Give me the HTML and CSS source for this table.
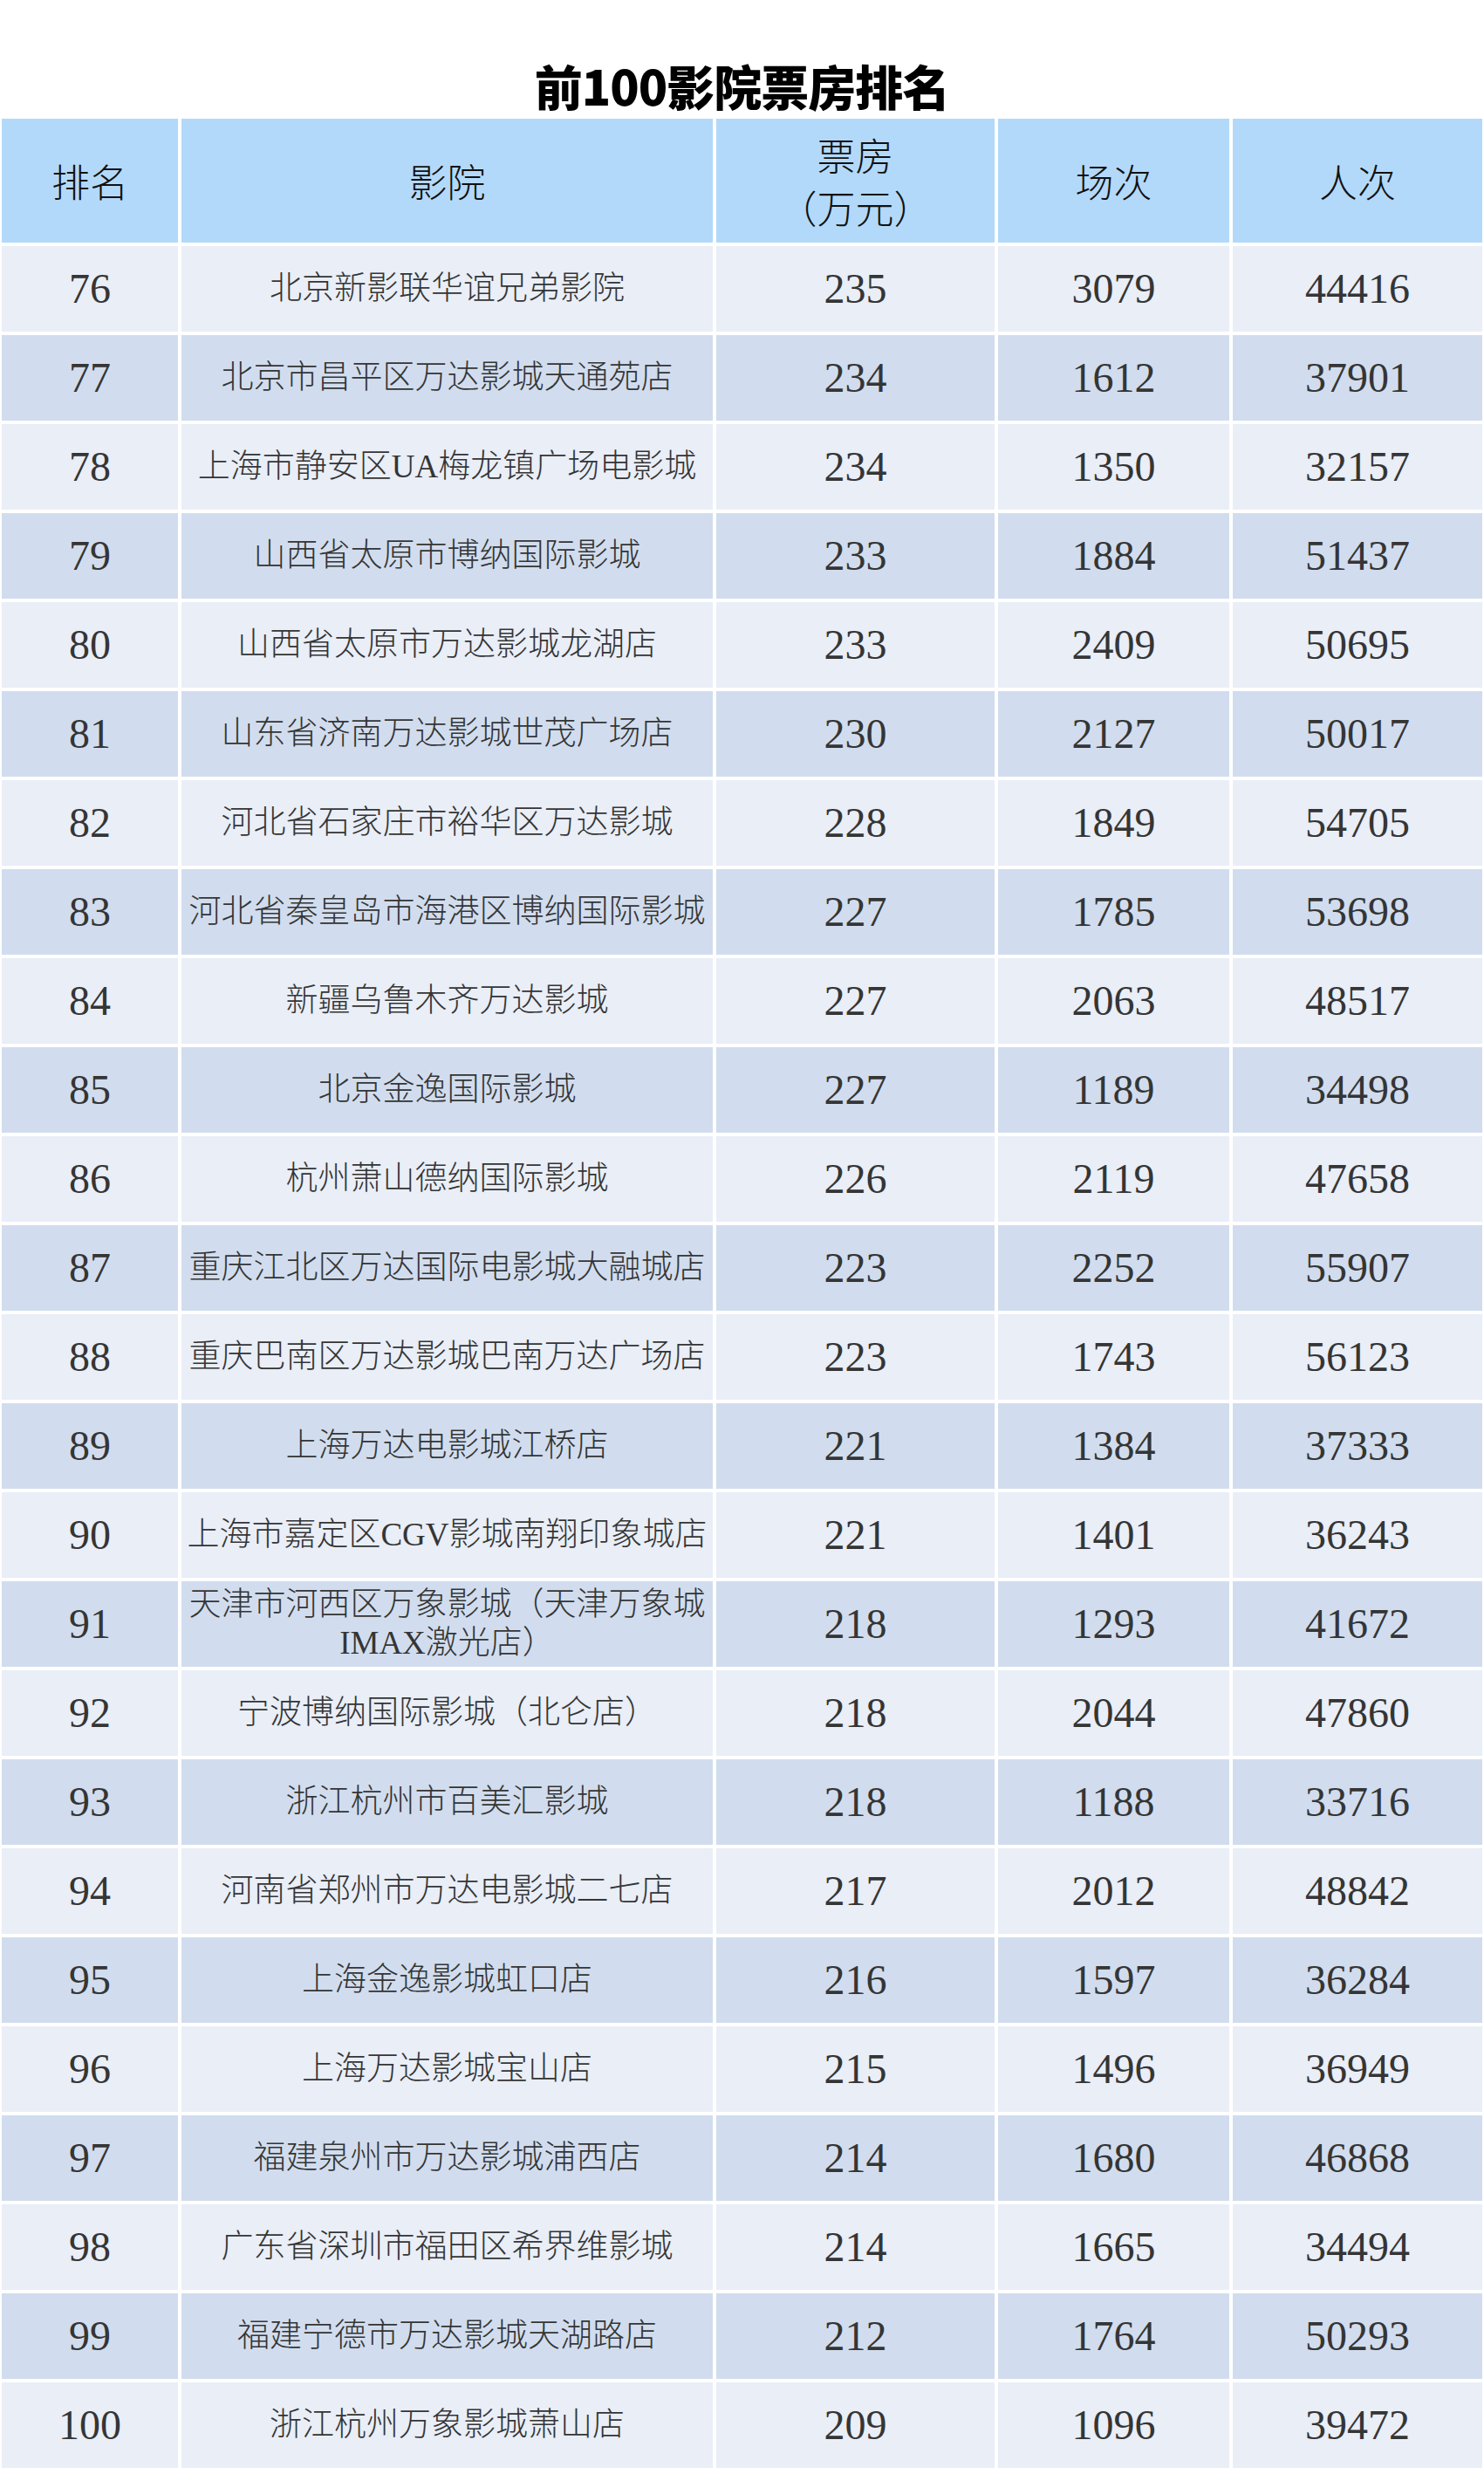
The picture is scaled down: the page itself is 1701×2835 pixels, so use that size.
FILE: index.html
```html
<!DOCTYPE html>
<html lang="zh-CN">
<head>
<meta charset="utf-8">
<title>前100影院票房排名</title>
<link rel="stylesheet" href="styles.css">
</head>
<body>
<h1 class="title">前100影院票房排名</h1>
<div class="table">
  <div class="row head">
    <div class="cell">排名</div>
    <div class="cell">影院</div>
    <div class="cell stack"><span class="line">票房</span><span class="line">（万元）</span></div>
    <div class="cell">场次</div>
    <div class="cell">人次</div>
  </div>
  <div class="row odd"><div class="cell num">76</div><div class="cell name">北京新影联华谊兄弟影院</div><div class="cell num">235</div><div class="cell num">3079</div><div class="cell num">44416</div></div>
  <div class="row even"><div class="cell num">77</div><div class="cell name">北京市昌平区万达影城天通苑店</div><div class="cell num">234</div><div class="cell num">1612</div><div class="cell num">37901</div></div>
  <div class="row odd"><div class="cell num">78</div><div class="cell name">上海市静安区UA梅龙镇广场电影城</div><div class="cell num">234</div><div class="cell num">1350</div><div class="cell num">32157</div></div>
  <div class="row even"><div class="cell num">79</div><div class="cell name">山西省太原市博纳国际影城</div><div class="cell num">233</div><div class="cell num">1884</div><div class="cell num">51437</div></div>
  <div class="row odd"><div class="cell num">80</div><div class="cell name">山西省太原市万达影城龙湖店</div><div class="cell num">233</div><div class="cell num">2409</div><div class="cell num">50695</div></div>
  <div class="row even"><div class="cell num">81</div><div class="cell name">山东省济南万达影城世茂广场店</div><div class="cell num">230</div><div class="cell num">2127</div><div class="cell num">50017</div></div>
  <div class="row odd"><div class="cell num">82</div><div class="cell name">河北省石家庄市裕华区万达影城</div><div class="cell num">228</div><div class="cell num">1849</div><div class="cell num">54705</div></div>
  <div class="row even"><div class="cell num">83</div><div class="cell name">河北省秦皇岛市海港区博纳国际影城</div><div class="cell num">227</div><div class="cell num">1785</div><div class="cell num">53698</div></div>
  <div class="row odd"><div class="cell num">84</div><div class="cell name">新疆乌鲁木齐万达影城</div><div class="cell num">227</div><div class="cell num">2063</div><div class="cell num">48517</div></div>
  <div class="row even"><div class="cell num">85</div><div class="cell name">北京金逸国际影城</div><div class="cell num">227</div><div class="cell num">1189</div><div class="cell num">34498</div></div>
  <div class="row odd"><div class="cell num">86</div><div class="cell name">杭州萧山德纳国际影城</div><div class="cell num">226</div><div class="cell num">2119</div><div class="cell num">47658</div></div>
  <div class="row even"><div class="cell num">87</div><div class="cell name">重庆江北区万达国际电影城大融城店</div><div class="cell num">223</div><div class="cell num">2252</div><div class="cell num">55907</div></div>
  <div class="row odd"><div class="cell num">88</div><div class="cell name">重庆巴南区万达影城巴南万达广场店</div><div class="cell num">223</div><div class="cell num">1743</div><div class="cell num">56123</div></div>
  <div class="row even"><div class="cell num">89</div><div class="cell name">上海万达电影城江桥店</div><div class="cell num">221</div><div class="cell num">1384</div><div class="cell num">37333</div></div>
  <div class="row odd"><div class="cell num">90</div><div class="cell name">上海市嘉定区CGV影城南翔印象城店</div><div class="cell num">221</div><div class="cell num">1401</div><div class="cell num">36243</div></div>
  <div class="row even"><div class="cell num">91</div><div class="cell name">天津市河西区万象影城（天津万象城IMAX激光店）</div><div class="cell num">218</div><div class="cell num">1293</div><div class="cell num">41672</div></div>
  <div class="row odd"><div class="cell num">92</div><div class="cell name">宁波博纳国际影城（北仑店）</div><div class="cell num">218</div><div class="cell num">2044</div><div class="cell num">47860</div></div>
  <div class="row even"><div class="cell num">93</div><div class="cell name">浙江杭州市百美汇影城</div><div class="cell num">218</div><div class="cell num">1188</div><div class="cell num">33716</div></div>
  <div class="row odd"><div class="cell num">94</div><div class="cell name">河南省郑州市万达电影城二七店</div><div class="cell num">217</div><div class="cell num">2012</div><div class="cell num">48842</div></div>
  <div class="row even"><div class="cell num">95</div><div class="cell name">上海金逸影城虹口店</div><div class="cell num">216</div><div class="cell num">1597</div><div class="cell num">36284</div></div>
  <div class="row odd"><div class="cell num">96</div><div class="cell name">上海万达影城宝山店</div><div class="cell num">215</div><div class="cell num">1496</div><div class="cell num">36949</div></div>
  <div class="row even"><div class="cell num">97</div><div class="cell name">福建泉州市万达影城浦西店</div><div class="cell num">214</div><div class="cell num">1680</div><div class="cell num">46868</div></div>
  <div class="row odd"><div class="cell num">98</div><div class="cell name">广东省深圳市福田区希界维影城</div><div class="cell num">214</div><div class="cell num">1665</div><div class="cell num">34494</div></div>
  <div class="row even"><div class="cell num">99</div><div class="cell name">福建宁德市万达影城天湖路店</div><div class="cell num">212</div><div class="cell num">1764</div><div class="cell num">50293</div></div>
  <div class="row odd"><div class="cell num">100</div><div class="cell name">浙江杭州万象影城萧山店</div><div class="cell num">209</div><div class="cell num">1096</div><div class="cell num">39472</div></div>
</div>
</body>
</html>
```

FILE: styles.css
```css
html, body {
  margin: 0;
  padding: 0;
  background: #ffffff;
}

.title {
  margin: 0;
  padding-top: 70px;
  height: 66px;
  line-height: 55px;
  font-family: "Noto Sans CJK SC", "Noto Sans", sans-serif;
  font-size: 55px;
  font-weight: 900;
  color: #000000;
  text-align: center;
  letter-spacing: -1px;
}

.table {
  margin-left: 2px;
  width: 1697px;
  display: flex;
  flex-direction: column;
  gap: 4px;
}

.row {
  display: grid;
  grid-template-columns: 202px 609px 319px 265px 286px;
  column-gap: 4px;
  height: 98px;
}

.row.head {
  height: 142px;
}

.cell {
  display: flex;
  align-items: center;
  justify-content: center;
  text-align: center;
  color: #353535;
  font-family: "Liberation Serif", "Noto Sans CJK SC", serif;
}

.head .cell {
  background: #b3d9fa;
  color: #111111;
  font-family: "Noto Sans CJK SC", sans-serif;
  font-weight: 300;
  font-size: 44px;
  line-height: 64px;
}

.head .stack {
  flex-direction: column;
  gap: 0;
}

.stack .line {
  display: block;
  height: 60px;
  line-height: 60px;
}

.odd .cell {
  background: #e9eef7;
}

.even .cell {
  background: #d1ddee;
}

.num {
  font-size: 48px;
  line-height: 1;
}

.name {
  font-size: 37px;
  line-height: 44px;
  padding: 0 6px;
  font-weight: 300;
}
```
